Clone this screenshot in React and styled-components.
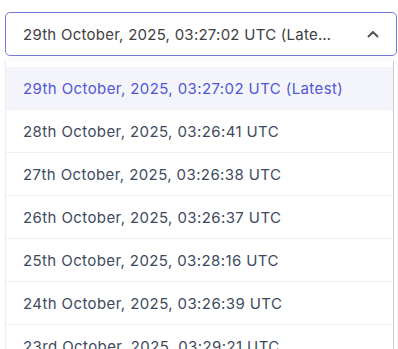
import React from "react";
import styled, { createGlobalStyle } from "styled-components";

const Global = createGlobalStyle`
  html, body { margin: 0; padding: 0; background: #fff; }
  body { font-family: "Inter", "Noto Sans", sans-serif; }
  * { box-sizing: border-box; }
`;

const Wrap = styled.div`
  width: 398px;
  height: 349px;
  overflow: hidden;
  padding: 12px 1px 0 5px;
  display: flex;
  flex-direction: column;
  gap: 5px;
`;

const Trigger = styled.div`
  flex-shrink: 0;
  height: 44px;
  border: 1px solid #7478dd;
  border-radius: 5px;
  display: flex;
  align-items: center;
  padding: 0 17px 0 17px;
  gap: 12px;
  background: #fff;
`;

const TriggerText = styled.span`
  flex: 1;
  font-size: 15px;
  letter-spacing: 0.25px;
  color: #404040;
  white-space: nowrap;
  overflow: hidden;
`;

const Menu = styled.div`
  flex: 1;
  min-height: 0;
  display: flex;
  border-left: 1px solid #eceef3;
  box-shadow: 0 -2px 4px rgba(0,0,0,0.04);
  padding-top: 6px;
  background: #fff;
`;

const List = styled.ul`
  list-style: none;
  margin: 0;
  padding: 0;
  flex: 1;
`;

const Item = styled.li`
  height: 43px;
  display: flex;
  align-items: center;
  padding-left: 17px;
  font-size: 15px;
  letter-spacing: 0.4px;
  color: ${p => (p.$active ? "#5055d6" : "#3d4a5e")};
  background: ${p => (p.$active ? "#f4f5fb" : "#fff")};
  border-bottom: 1px solid #eef0f4;
  white-space: nowrap;
`;

const Scrollbar = styled.div`
  width: 4px;
  background: #fff;
  border-left: 1px solid #c9ccd2;
  margin-top: -6px;
`;

const items = [
  "29th October, 2025, 03:27:02 UTC (Latest)",
  "28th October, 2025, 03:26:41 UTC",
  "27th October, 2025, 03:26:38 UTC",
  "26th October, 2025, 03:26:37 UTC",
  "25th October, 2025, 03:28:16 UTC",
  "24th October, 2025, 03:26:39 UTC",
  "23rd October, 2025, 03:29:21 UTC",
];

export default function App() {
  return (
    <>
      <Global />
      <Wrap>
        <Trigger>
          <TriggerText>29th October, 2025, 03:27:02 UTC (Late…</TriggerText>
          <svg width="12" height="8" viewBox="0 0 12 8" fill="none">
            <path d="M1.5 6.5 L6 2 L10.5 6.5" stroke="#555" strokeWidth="2" strokeLinecap="round" strokeLinejoin="round" />
          </svg>
        </Trigger>
        <Menu>
          <List>
            {items.map((t, i) => (
              <Item key={t} $active={i === 0}>{t}</Item>
            ))}
          </List>
          <Scrollbar />
        </Menu>
      </Wrap>
    </>
  );
}
